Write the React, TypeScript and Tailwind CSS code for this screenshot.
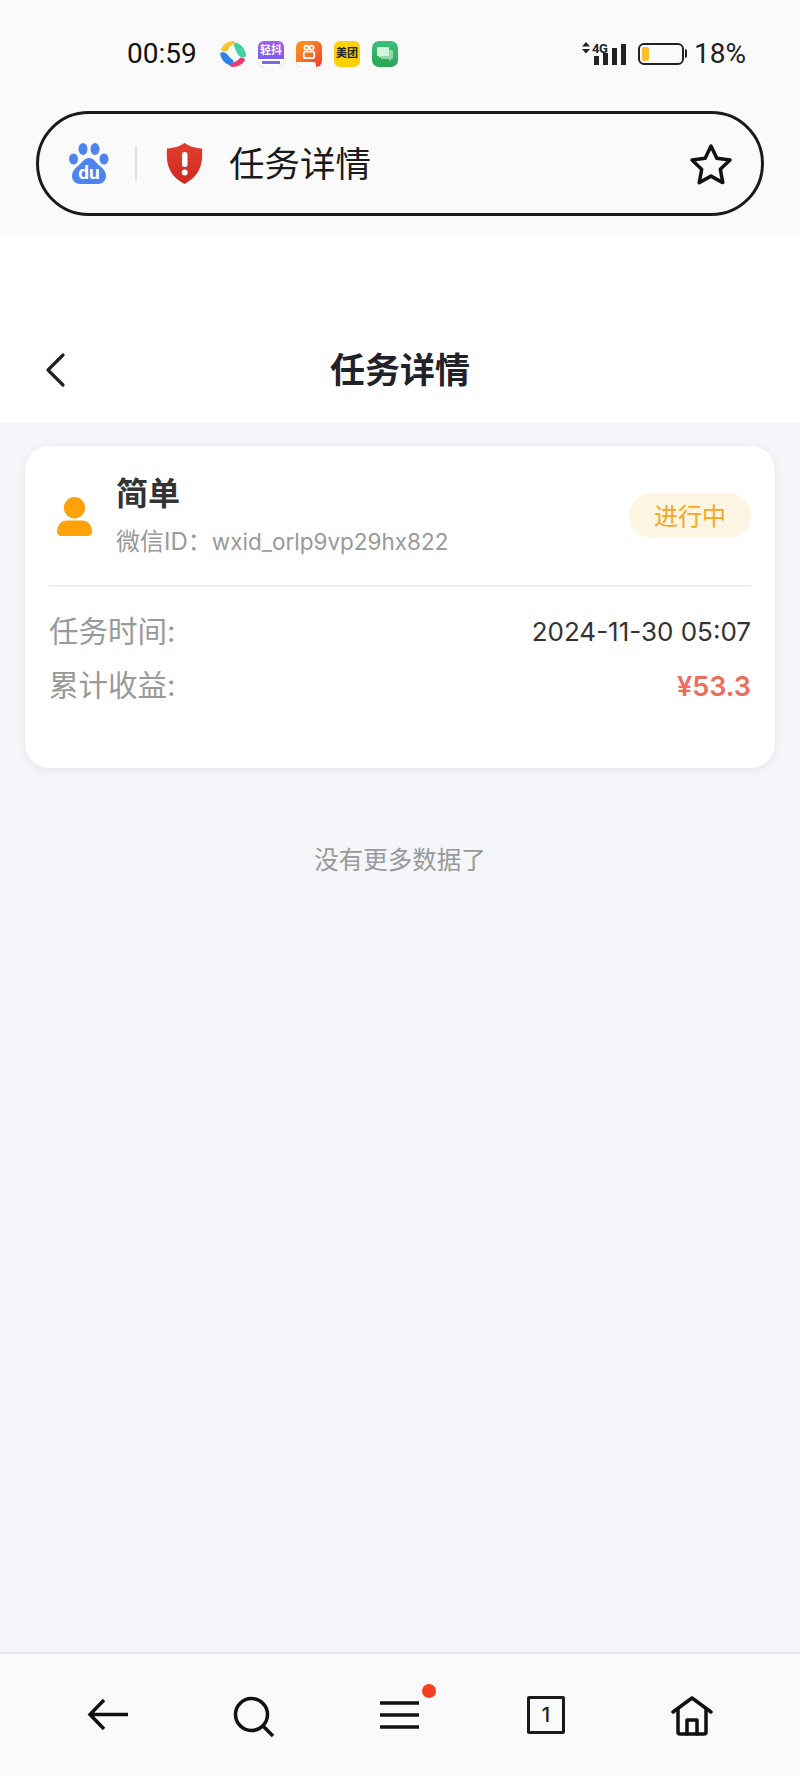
const sans = "font-['Inter','Noto_Sans_CJK_SC',sans-serif]"

function AppIcons() {
  return (
    <div className="ml-[22px] flex items-center gap-[12px]">
      {/* spinner logo */}
      <svg width="27" height="27" viewBox="0 0 27 27">
        <path d="M2 10C4 4 9 1 15 1c1 0 1 2 0 3-3 1-5 3-6 6-1 2-5 2-7 0z" fill="#fbc531" />
        <path d="M18 3c5 2 8 6 9 12 0 2-3 3-5 2-3-1-5-6-7-11-1-2 1-4 3-3z" fill="#3fd0a6" />
        <path d="M11 23c3 0 8-2 10-5 1-1 5 0 5 2-2 4-7 7-12 7-3 0-5-3-3-4z" fill="#ee3a6a" />
        <path d="M1 13c2-1 5-1 7 1 2 3 4 5 6 6 1 2-1 5-3 5C6 24 2 20 1 13z" fill="#2f80ed" />
      </svg>
      <div className="flex h-[26px] w-[26px] flex-col items-center overflow-hidden rounded-[6px] bg-gradient-to-b from-[#a25cf0] to-[#6a5cf0]">
        <span className="mt-[2px] text-[11px] leading-[14px] font-bold text-white">轻抖</span>
        <div className="mt-auto flex h-[8px] w-full items-center justify-center bg-white">
          <div className="h-[3px] w-[18px] bg-[#7a6ae0]" />
        </div>
      </div>
      <div className="relative flex h-[26px] w-[26px] justify-center overflow-hidden rounded-[6px] bg-gradient-to-br from-[#fb9a1a] to-[#f0382a] pt-[3px]">
        <svg width="14" height="16" viewBox="0 0 16 18" fill="none" stroke="white" strokeWidth="2">
          <circle cx="5" cy="4" r="2.400" />
          <circle cx="11" cy="4" r="2.400" />
          <rect x="2" y="8.500" width="12" height="7.500" rx="2" />
        </svg>
        <div className="absolute bottom-0 left-0 h-[5px] w-[20px] rounded-tr-[3px] bg-white" />
      </div>
      <div className="flex h-[26px] w-[26px] items-center justify-center rounded-[6px] bg-[#ffd100]">
        <span className="text-[11px] leading-none font-bold text-[#222]">美团</span>
      </div>
      <div className="flex h-[26px] w-[26px] items-center justify-center rounded-[7px] bg-gradient-to-b from-[#3cc07a] to-[#27a552]">
        <svg width="18" height="16" viewBox="0 0 18 16">
          <path d="M6 4h10a1 1 0 0 1 1 1v7a1 1 0 0 1-1 1h-1v2l-3-2H6a1 1 0 0 1-1-1V5a1 1 0 0 1 1-1z" fill="#8fd8a8" />
          <path d="M2 1h10a1 1 0 0 1 1 1v7a1 1 0 0 1-1 1H6l-3 2v-2H2a1 1 0 0 1-1-1V2a1 1 0 0 1 1-1z" fill="#d5f2df" />
        </svg>
      </div>
    </div>
  )
}

function SignalIcons() {
  return (
    <div className="flex items-center font-['Roboto',sans-serif]">
      <div className="relative h-[24px] w-[45px]">
        <svg width="45" height="24" viewBox="0 0 45 24">
          <path d="M0 4.500 4 0l4 4.500zM0 7h8l-4 4.500z" fill="#222" />
          <rect x="12" y="14" width="5" height="9" fill="#222" />
          <rect x="21" y="11" width="5" height="12" fill="#222" />
          <rect x="30" y="6" width="5" height="17" fill="#222" />
          <rect x="39" y="2" width="5" height="21" fill="#222" />
        </svg>
        <span className="absolute top-0 left-[10px] text-[13px] leading-none font-bold tracking-[-0.5px] text-[#222]">4G</span>
      </div>
      <div className="ml-[11px] flex items-center">
        <div className="flex h-[22px] w-[46px] items-center rounded-[6px] border-2 border-[#222] px-[2px]">
          <div className="h-[14px] w-[7px] rounded-[2px] bg-[#fbc02d]" />
        </div>
        <div className="ml-[1px] h-[9px] w-[2px] rounded-r-sm bg-[#222]" />
      </div>
      <span className="ml-[7px] w-[52px] text-[28px] leading-none text-[#222]">18%</span>
    </div>
  )
}

function BaiduIcon() {
  return (
    <svg width="40" height="41" viewBox="0 0 40 41" fill="#4e84ee">
      <ellipse cx="4.500" cy="16" rx="4.500" ry="5.500" />
      <ellipse cx="14" cy="6" rx="4.500" ry="6" />
      <ellipse cx="26" cy="6" rx="4.500" ry="6" />
      <ellipse cx="35" cy="16" rx="4.500" ry="5.500" />
      <path d="M20 15c5 0 7 5 11 8 4 3 6 6 6 10 0 5-4 8-8 8H11c-4 0-8-3-8-8 0-4 2-7 6-10 4-3 6-8 11-8z" />
      <text x="20" y="36" textAnchor="middle" fontSize="19" fontWeight="700" fill="#fff" fontFamily="Roboto, sans-serif">du</text>
    </svg>
  )
}

function ShieldIcon() {
  return (
    <svg width="37" height="41" viewBox="0 0 37 41">
      <defs>
        <linearGradient id="shield" x1="0" y1="0" x2="0" y2="1">
          <stop offset="0" stopColor="#e0402f" />
          <stop offset="1" stopColor="#d0281f" />
        </linearGradient>
      </defs>
      <path d="M18.500 0C23 3 28 5 36 5.500c1 14-1 27-17.500 35.500C2 32.500 0 19.500 1 5.500 9 5 14 3 18.500 0z" fill="url(#shield)" />
      <rect x="16" y="9" width="5.500" height="15" rx="2.500" fill="#fff" />
      <circle cx="18.700" cy="29.500" r="3" fill="#fff" />
    </svg>
  )
}

export default function App() {
  return (
    <div className={`flex h-[1777px] w-[800px] flex-col bg-[#f5f6fa] ${sans}`}>
      {/* Status bar + url bar */}
      <div className="h-[237px] bg-[#fafafa] pt-[40px]">
        <div className="flex h-[27px] items-center justify-between pr-[54px] pl-[127px]">
          <div className="flex items-center">
            <span className="w-[70px] font-['Roboto',sans-serif] text-[28px] leading-none text-[#111]">00:59</span>
            <AppIcons />
          </div>
          <SignalIcons />
        </div>
        <div className="mx-[36px] mt-[44px] flex h-[105px] items-center rounded-full border-[3.500px] border-[#1a1a1a] pr-[28px] pl-[30px]">
          <BaiduIcon />
          <div className="mr-[29px] ml-[26px] h-[35px] w-[2px] bg-[#e2e2e2]" />
          <ShieldIcon />
          <span className="ml-[26px] flex-1 pt-[2px] text-[35.500px] leading-none text-[#1a1a1a]">任务详情</span>
          <svg width="44" height="42" viewBox="0 0 44 42" fill="none" stroke="#111" strokeWidth="3.500" strokeLinejoin="round">
            <path d="M22 3l5.800 12.300 13.200 1.800-9.700 9.200 2.500 13.300L22 33.100 10.200 39.600l2.500-13.300L3 17.100l13.200-1.800z" />
          </svg>
        </div>
      </div>

      {/* Page header */}
      <div className="flex h-[185px] items-end bg-white pb-[33px]">
        <div className="relative flex h-[38px] w-full items-center justify-center">
          <svg className="absolute left-[44px]" width="24" height="36" viewBox="0 0 24 36" fill="none" stroke="#222" strokeWidth="3.200" strokeLinecap="round" strokeLinejoin="round">
            <path d="M19 3 4 18l15 15" />
          </svg>
          <span className="text-[35px] leading-none font-semibold text-[#1f2329]">任务详情</span>
        </div>
      </div>

      {/* Task card */}
      <div className="mx-[25px] mt-[24px] h-[322px] rounded-[24px] bg-white px-[24px] shadow-[0_2px_10px_rgba(0,0,0,0.07)]">
        <div className="flex h-[141px] items-center border-b-2 border-[#eeeeee]">
          <svg className="mt-[2px] ml-[8px]" width="35" height="39" viewBox="0 0 36 40" fill="#ffa20a">
            <circle cx="18" cy="11" r="11" />
            <path d="M10 24h16c6 0 10 5 10 12 0 2-2 4-4 4H4c-2 0-4-2-4-4 0-7 4-12 10-12z" />
          </svg>
          <div className="ml-[24px] flex flex-1 flex-col">
            <span className="text-[32px] leading-[40px] font-semibold text-[#333]">简单</span>
            <span className="mt-[13px] text-[24px] leading-[30px] text-[#999]">
              微信ID：<span className="text-[22.500px]">wxid_orlp9vp29hx822</span>
            </span>
          </div>
          <div className="flex h-[45px] w-[122px] items-center justify-center rounded-full bg-[#fff5e2] pt-[2px] text-[24px] leading-none text-[#f5a623]">
            进行中
          </div>
        </div>
        <div className="mt-[27px] flex h-[36px] items-center justify-between">
          <span className="text-[29.500px] leading-none text-[#999]">任务时间:</span>
          <span className="text-[26px] leading-none text-[#333]">2024-11-30 05:07</span>
        </div>
        <div className="mt-[18px] flex h-[36px] items-center justify-between">
          <span className="text-[29.500px] leading-none text-[#999]">累计收益:</span>
          <span className="text-[27px] leading-none font-semibold text-[#ee6b60]">¥53.3</span>
        </div>
      </div>

      <div className="mt-[76px] text-center text-[24.500px] leading-[32px] text-[#999]">没有更多数据了</div>

      {/* Bottom toolbar */}
      <div className="mt-auto grid h-[125px] grid-cols-5 border-t-2 border-[#e8e9ee] bg-[#fafafa] px-[35px] pt-[42px]">
        <div className="flex justify-center">
          <svg className="mt-[2px]" width="42" height="34" viewBox="0 0 42 34" fill="none" stroke="#111" strokeWidth="3.500">
            <path d="M41 16.500H4M17 2 3 16.500 17 31" />
          </svg>
        </div>
        <div className="flex justify-center">
          <svg width="42" height="42" viewBox="0 0 42 42" fill="none" stroke="#111" strokeWidth="3.500">
            <circle cx="18.500" cy="18.500" r="16" />
            <path d="M30 30l10 10" />
          </svg>
        </div>
        <div className="relative flex justify-center">
          <svg width="42" height="42" viewBox="0 0 42 42" fill="none" stroke="#111" strokeWidth="3.500">
            <path d="M1 7h39M1 19h39M1 31h39" />
          </svg>
          <div className="absolute top-[-12px] right-[37px] h-[14px] w-[14px] rounded-full bg-[#f4401f]" />
        </div>
        <div className="flex justify-center">
          <div className="flex h-[38px] w-[38px] items-center justify-center rounded-[2px] border-[3.500px] border-[#1a1a1a] text-[20px] leading-none font-medium text-[#1a1a1a]">
            1
          </div>
        </div>
        <div className="flex justify-center">
          <svg width="42" height="40" viewBox="0 0 42 40" fill="none" stroke="#111" strokeWidth="3.500" strokeLinejoin="round" strokeLinecap="round">
            <path d="M2 16 21 2l19 14" />
            <path d="M7 13v23a2 2 0 0 0 2 2h24a2 2 0 0 0 2-2V13" />
            <path d="M16 38V24h10v14" />
          </svg>
        </div>
      </div>
    </div>
  )
}
